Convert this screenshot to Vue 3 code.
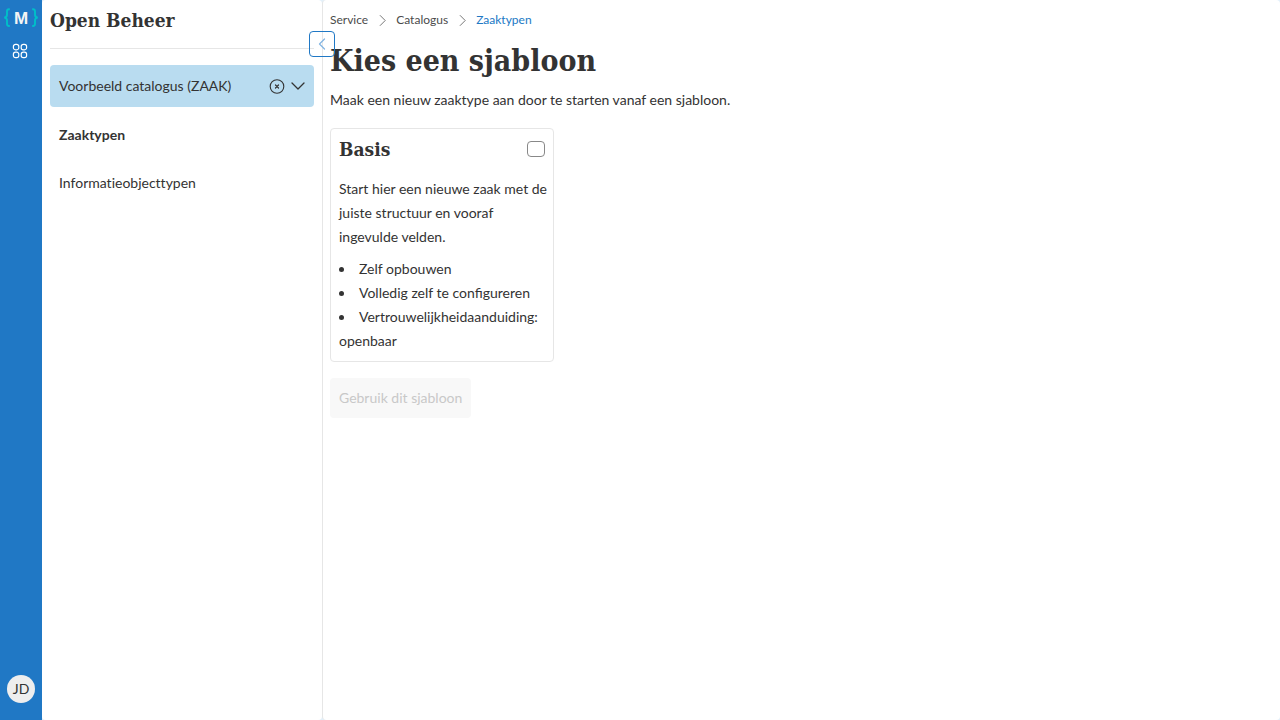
<script setup>
import { ref } from 'vue'

const chosen = ref(false)
const features = ['Zelf opbouwen', 'Volledig zelf te configureren', 'Vertrouwelijkheidaanduiding: openbaar']
</script>

<template>
  <div class="app">
    <nav class="rail" aria-label="Hoofdmenu">
      <a class="logo" href="#" aria-label="Maykin">
        <svg width="36" height="20" viewBox="0 0 36 20" aria-hidden="true">
          <g fill="none" stroke="#00bfc8" stroke-width="1.9">
            <path d="M6.8 1.2H6Q4 1.2 4 3.4V6.8Q4 9.4 1.2 9.6Q4 9.8 4 12.4V15.8Q4 18 6 18H6.8" />
            <path d="M29.2 1.2H30Q32 1.2 32 3.4V6.8Q32 9.4 34.8 9.6Q32 9.8 32 12.4V15.8Q32 18 30 18H29.2" />
          </g>
          <text class="letter" x="18" y="16" text-anchor="middle">M</text>
        </svg>
      </a>
      <button class="icon-button" type="button" aria-label="Overzicht">
        <svg width="16" height="16" viewBox="0 0 16 16" fill="none" stroke="#fff" stroke-width="1.2" aria-hidden="true">
          <rect x="1.4" y="1.4" width="5.4" height="5.4" rx="2.1" />
          <rect x="9.2" y="1.4" width="5.4" height="5.4" rx="2.1" />
          <rect x="1.4" y="9.2" width="5.4" height="5.4" rx="2.1" />
          <rect x="9.2" y="9.2" width="5.4" height="5.4" rx="2.1" />
        </svg>
      </button>
      <button class="avatar" type="button">JD</button>
    </nav>

    <aside class="sidebar">
      <h2 class="title">Open Beheer</h2>
      <hr class="rule" />
      <div class="picker">
        <button class="picker-value" type="button">Voorbeeld catalogus (ZAAK)</button>
        <button class="picker-icon" type="button" aria-label="Wissen">
          <svg width="16" height="16" viewBox="0 0 16 16" fill="none" stroke="#333" stroke-linecap="round" aria-hidden="true">
            <circle cx="8" cy="8.5" r="6.8" stroke-width="1.1" />
            <path d="M6.5 7l3 3M9.5 7l-3 3" stroke-width="1.2" />
          </svg>
        </button>
        <button class="picker-icon" type="button" aria-label="Openen">
          <svg width="16" height="16" viewBox="0 0 16 16" fill="none" stroke="#333" stroke-width="1.3" stroke-linecap="round" stroke-linejoin="round" aria-hidden="true">
            <path d="M2 5l6 6 6-6" />
          </svg>
        </button>
      </div>
      <a class="item current" href="#">Zaaktypen</a>
      <a class="item" href="#">Informatieobjecttypen</a>
      <button class="collapse" type="button" aria-label="Inklappen">
        <svg width="14" height="14" viewBox="0 0 14 14" fill="none" stroke="#84b6e3" stroke-width="1.3" stroke-linecap="round" stroke-linejoin="round" aria-hidden="true">
          <path d="M9.5 2L4.5 7l5 5" />
        </svg>
      </button>
    </aside>

    <main class="main">
      <nav class="crumbs" aria-label="Kruimelpad">
        <a href="#">Service</a>
        <svg width="12" height="12" viewBox="0 0 12 12" aria-hidden="true"><path d="M4.2 1.5l5 5-5 5" /></svg>
        <a href="#">Catalogus</a>
        <svg width="12" height="12" viewBox="0 0 12 12" aria-hidden="true"><path d="M4.2 1.5l5 5-5 5" /></svg>
        <a class="here" href="#">Zaaktypen</a>
      </nav>
      <h1 class="heading">Kies een sjabloon</h1>
      <p class="intro">Maak een nieuw zaaktype aan door te starten vanaf een sjabloon.</p>
      <article class="card">
        <header class="card-head">
          <h2 class="title"><label for="basis">Basis</label></h2>
          <input id="basis" v-model="chosen" type="checkbox" />
        </header>
        <p class="text">Start hier een nieuwe zaak met de juiste structuur en vooraf ingevulde velden.</p>
        <ul class="features">
          <li v-for="feature in features" :key="feature">{{ feature }}</li>
        </ul>
      </article>
      <button class="submit" type="button" :disabled="!chosen">Gebruik dit sjabloon</button>
    </main>
  </div>
</template>

<style>
body {
  background: #e3f0fa;
}
</style>

<style scoped>
.app {
  display: flex;
  min-height: 100vh;
  color: #333;
  font: 14px/24px Lato, "Noto Sans", sans-serif;
}
.app * {
  box-sizing: border-box;
}
a {
  color: inherit;
  text-decoration: none;
}
button {
  padding: 0;
  border: 0;
  background: none;
  color: inherit;
  font: inherit;
}
svg {
  display: block;
}
h1, h2, p, ul {
  margin: 0;
}
.rail {
  display: flex;
  flex: none;
  flex-direction: column;
  align-items: center;
  width: 42px;
  padding: 8px 0 17px;
  background: #2078c5;
}
.logo {
  height: 20px;
}
.letter {
  fill: #f4f4f4;
  font: 700 17px "Liberation Sans", sans-serif;
}
.icon-button {
  margin-top: 15px;
  padding-right: 2px;
}
.avatar {
  width: 28px;
  height: 28px;
  margin-top: auto;
  border-radius: 50%;
  background: #eee;
}
.sidebar {
  position: relative;
  flex: none;
  width: 280px;
  padding: 8px;
  border-radius: 4px;
  background: #fff;
}
.title, .heading {
  font-family: "Roboto Slab", "DejaVu Serif Condensed", "DejaVu Serif", serif;
  font-weight: 700;
}
.title {
  font-size: 19px;
  line-height: 24px;
}
.rule {
  height: 1px;
  margin: 16px 0;
  border: 0;
  background: #e6e6e6;
}
.picker {
  display: flex;
  align-items: center;
  gap: 5px;
  height: 42px;
  padding: 0 8px 0 9px;
  border-radius: 4px;
  background: #b9dcf0;
}
.picker-value {
  flex: 1;
  text-align: left;
}
.item {
  display: block;
  margin-top: 8px;
  padding: 8px 9px;
  font-variant-ligatures: no-common-ligatures;
}
.current {
  font-weight: 700;
}
.collapse {
  display: grid;
  position: absolute;
  z-index: 1;
  top: 31px;
  right: -13px;
  place-items: center;
  width: 26px;
  height: 26px;
  border: 1px solid #2078c5;
  border-radius: 4px;
}
.main {
  flex: 1;
  min-width: 0;
  padding: 8px 8px 8px 7px;
  border-left: 1px solid #e6e6e6;
  border-radius: 4px;
  background: #fff;
}
.crumbs {
  display: flex;
  align-items: center;
  gap: 8px;
  color: #4b4b4b;
  font-size: 12px;
}
.crumbs svg {
  fill: none;
  stroke: #777;
  stroke-linecap: round;
}
.crumbs .here {
  color: #2078c5;
}
.heading {
  margin-top: 9px;
  font-size: 30px;
  line-height: 40px;
}
.intro {
  margin-top: 7px;
}
.card {
  width: 224px;
  margin: 16px 0;
  padding: 8px;
  border: 1px solid #e6e6e6;
  border-radius: 4px;
}
.card-head {
  display: flex;
  align-items: center;
  justify-content: space-between;
  margin-bottom: 16px;
}
.card-head input {
  appearance: none;
  width: 18px;
  height: 16px;
  margin: 0;
  border: 1px solid #888;
  border-radius: 4px;
}
.card-head input:checked {
  background: #2078c5;
}
.text {
  margin-right: -6px;
}
.features {
  margin-top: 8px;
  padding: 0;
  list-style-position: inside;
}
.submit {
  height: 40px;
  padding: 0 9px;
  border-radius: 4px;
  background: #2078c5;
  color: #fff;
}
.submit:disabled {
  background: #f8f8f8;
  color: #c8c8c8;
}
</style>
